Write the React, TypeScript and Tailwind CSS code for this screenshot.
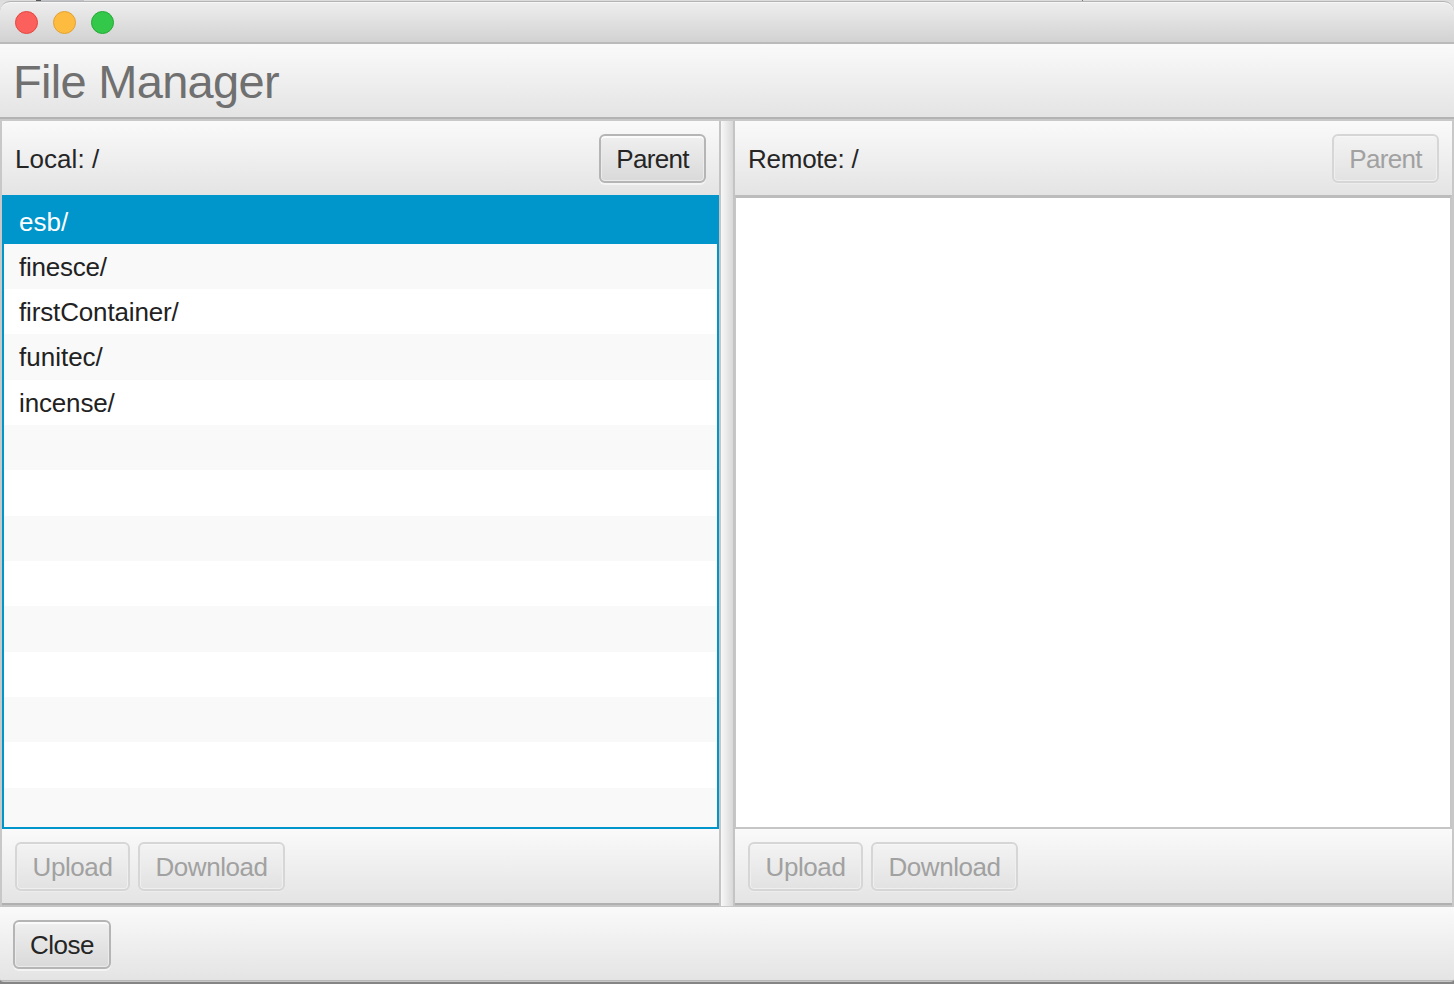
import { useState } from "react";

const bar = "bg-gradient-to-b from-[#fafafa] to-[#e4e4e4]";

function Button({ label, width, spacing, disabled }: { label: string; width: string; spacing: string; disabled?: boolean }) {
  return (
    <button
      disabled={disabled}
      className={`h-[49px] shrink-0 rounded-[6px] border-2 bg-gradient-to-b text-center leading-[46px] whitespace-nowrap ${width} ${spacing} ${
        disabled
          ? "border-[#d6d6d6] from-[#f3f3f3] to-[#e2e2e2] text-[#a1a1a1] shadow-[inset_0_1px_0_#f7f7f7,inset_0_0_0_1px_#efefef,0_1px_0_#ededed]"
          : "border-[#b5b5b5] from-[#f0f0f0] to-[#d9d9d9] text-[#252525] shadow-[inset_0_2px_0_#fbfbfb,inset_0_0_0_1px_#ebebeb,0_2px_0_#f4f4f4]"
      }`}
    >
      {label}
    </button>
  );
}

function FileList({ files }: { files: { name: string; spacing: string }[] }) {
  const [selected, setSelected] = useState(0);
  return (
    <ul className="h-[634px] overflow-hidden border-2 border-[#0096cc] bg-white">
      {Array.from({ length: 14 }, (_, i) => (
        <li
          key={i}
          onClick={() => i < files.length && setSelected(i)}
          className={`pl-[15px] ${i === 0 ? "h-[46.8px] pt-px leading-[48px]" : "h-[45.33px] leading-[46px]"} ${
            selected === i ? "bg-[#0096cc] text-white" : i % 2 ? "bg-[#f9f9f9] text-[#222]" : "bg-white text-[#222]"
          } ${files[i]?.spacing ?? ""}`}
        >
          {files[i]?.name}
        </li>
      ))}
    </ul>
  );
}

function PaneFooter() {
  return (
    <div className={`flex h-[74px] gap-2 pt-[13px] pl-[13px] ${bar}`}>
      <Button label="Upload" width="w-[115px]" spacing="tracking-[-0.4px]" disabled />
      <Button label="Download" width="w-[147px]" spacing="tracking-[-0.45px]" disabled />
    </div>
  );
}

export default function App() {
  const files = [
    { name: "esb/", spacing: "tracking-[0.05px]" },
    { name: "finesce/", spacing: "tracking-[-0.25px]" },
    { name: "firstContainer/", spacing: "tracking-[-0.15px]" },
    { name: "funitec/", spacing: "tracking-[0px]" },
    { name: "incense/", spacing: "tracking-[-0.15px]" },
  ];
  return (
    <div className="flex h-[984px] w-[1454px] flex-col overflow-hidden bg-gradient-to-b from-[#dedede] from-50% to-[#858585] to-50% font-['Liberation_Sans',Arial,sans-serif] text-[26px]">
      <div className="flex h-px shrink-0 bg-[#dcdcdc]">
        <i className="ml-9 w-[5px] bg-[#555]" />
        <i className="w-[43px] bg-[#c0c3c8]" />
        <i className="ml-[998px] w-px bg-[#777]" />
      </div>
      <div className="flex h-[981px] shrink-0 flex-col overflow-hidden rounded-t-[10px] rounded-b-[4px] bg-[#c8c8c8]">
        <header className="flex h-[43px] shrink-0 items-center gap-[14px] rounded-t-[10px] border-t border-b-2 border-t-[#b4b4b4] border-b-[#bababa] bg-gradient-to-b from-[#eeeeee] to-[#d2d2d2] pl-[14px] shadow-[inset_0_1px_0_#f7f7f7]">
          <span className="ml-px size-[23px] rounded-full border border-[#e2463f] bg-[#fc605c]" />
          <span className="ml-px size-[23px] rounded-full border border-[#e1a032] bg-[#fdbc40]" />
          <span className="ml-px size-[23px] rounded-full border border-[#24a934] bg-[#34c84a]" />
        </header>
        <div className={`h-[73px] shrink-0 pl-[13px] ${bar}`}>
          <h1 className="text-[47px] leading-[76px] tracking-[-0.7px] text-[#707070]">File Manager</h1>
        </div>
        <div className="h-[4px] shrink-0 border-t-2 border-[#b3b3b3] bg-[#c9c9c9]" />
        <main className="flex h-[786px] shrink-0">
          <section className="ml-[2px] w-[717px]">
            <div className={`flex h-[74px] justify-between pt-[13px] pr-[13px] pl-[13px] ${bar}`}>
              <span className="leading-[51px] tracking-[0.05px] text-[#252525]">Local: /</span>
              <Button label="Parent" width="w-[107px]" spacing="tracking-[-0.7px]" />
            </div>
            <FileList files={files} />
            <PaneFooter />
            <div className="h-[4px] border-t-2 border-[#b0b0b0] bg-[#c4c4c4]" />
          </section>
          <div className="h-[785px] w-[16px] border-x-2 border-[#c4c4c4] bg-gradient-to-r from-[#f8f8f8] to-[#d9d9d9]" />
          <section className="w-[717px]">
            <div className={`flex h-[74px] justify-between pt-[13px] pr-[13px] pl-[13px] ${bar}`}>
              <span className="leading-[51px] tracking-[-0.25px] text-[#252525]">Remote: /</span>
              <Button label="Parent" width="w-[107px]" spacing="tracking-[-0.7px]" disabled />
            </div>
            <div className="h-[634px] border-t-[3px] border-r-2 border-b-2 border-l border-[#c6c6c6] border-t-[#bcbcbc] bg-white" />
            <PaneFooter />
            <div className="h-[4px] border-t-2 border-[#b0b0b0] bg-[#c4c4c4]" />
          </section>
        </main>
        <footer className={`h-[74px] shrink-0 border-b border-[#b8b8b8] pt-[13px] pl-[13px] ${bar}`}>
          <Button label="Close" width="w-[98px]" spacing="tracking-[-0.5px]" />
        </footer>
      </div>
    </div>
  );
}
